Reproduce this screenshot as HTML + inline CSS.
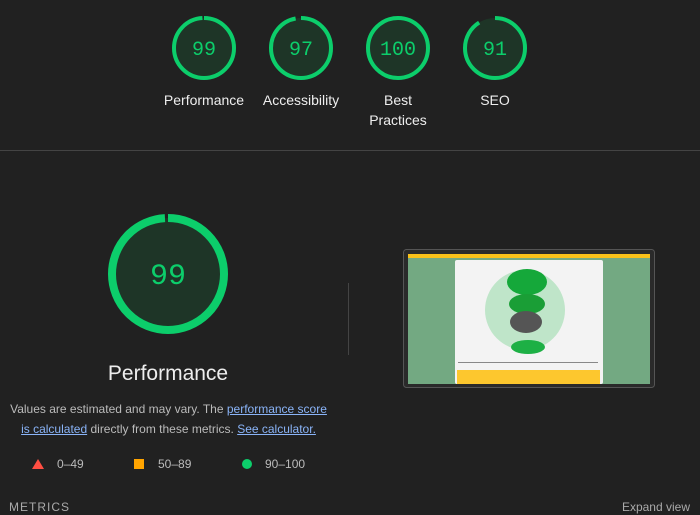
<!DOCTYPE html>
<html><head><style>
body{margin:0;width:700px;height:515px;background:#212121;font-family:"Liberation Sans",sans-serif;overflow:hidden;position:relative;color:#eee}
.lbl{position:absolute;width:100px;text-align:center;font-size:14px;color:#eee;line-height:20px}
.num{font-family:"Liberation Mono",monospace;fill:#0cce6b}
a{color:#8ab4f8;text-decoration:underline}
</style></head><body>
<svg width="700" height="515" style="position:absolute;left:0;top:0">
<g fill="#1e3527" stroke="#0cce6b" stroke-width="4">
<circle cx="204" cy="48" r="30" stroke-dasharray="186.6 188.5" transform="rotate(-90 204 48)"/>
<circle cx="301" cy="48" r="30" stroke-dasharray="182.8 188.5" transform="rotate(-90 301 48)"/>
<circle cx="398" cy="48" r="30"/>
<circle cx="495" cy="48" r="30" stroke-dasharray="171.5 188.5" transform="rotate(-90 495 48)"/>
<circle cx="168" cy="274" r="56" stroke-width="8" stroke-dasharray="348.4 351.9" transform="rotate(-90 168 274)"/>
</g>
<g class="num" font-size="20" text-anchor="middle">
<text x="204" y="55">99</text><text x="301" y="55">97</text><text x="398" y="55">100</text><text x="495" y="55">91</text>
</g>
<text class="num" x="168" y="284" font-size="30" text-anchor="middle">99</text>
<line x1="0" y1="150.5" x2="700" y2="150.5" stroke="#444" stroke-width="1"/>
<line x1="348.5" y1="283" x2="348.5" y2="355" stroke="#444"/>
<polygon points="38,459 44,469 32,469" fill="#ff4e42"/>
<rect x="134" y="459" width="10" height="10" fill="#ffa400"/>
<circle cx="247" cy="464" r="5" fill="#0cce6b"/>
<rect x="403.5" y="249.5" width="251" height="138" rx="3" fill="#2a2a2a" stroke="#555"/>
<rect x="408" y="254" width="242" height="130" fill="#73a982"/>
<rect x="408" y="254" width="242" height="4" fill="#f9c11a"/>
<rect x="455" y="260" width="148" height="124" rx="2" fill="#f3f3f3"/>
<ellipse cx="525" cy="310" rx="40" ry="40" fill="#bfe5c9"/>
<ellipse cx="527" cy="282" rx="20" ry="13" fill="#15a83a"/>
<ellipse cx="527" cy="304" rx="18" ry="10" fill="#1a9e36"/>
<ellipse cx="526" cy="322" rx="16" ry="11" fill="#555"/>
<ellipse cx="528" cy="347" rx="17" ry="7" fill="#1db045"/>
<rect x="458" y="362" width="140" height="1" fill="#888"/>
<rect x="457" y="370" width="143" height="14" fill="#fdc72e"/>
</svg>
<div class="lbl" style="left:154px;top:90px">Performance</div>
<div class="lbl" style="left:251px;top:90px">Accessibility</div>
<div class="lbl" style="left:348px;top:90px">Best<br>Practices</div>
<div class="lbl" style="left:445px;top:90px">SEO</div>
<div style="position:absolute;left:68px;width:200px;top:362px;text-align:center;font-size:21px;color:#eee">Performance</div>
<div style="position:absolute;left:0;width:337px;top:399px;text-align:center;font-size:12px;line-height:20px;color:#bbb">Values are estimated and may vary. The <a>performance score<br>is calculated</a> directly from these metrics. <a>See calculator.</a></div>
<div style="position:absolute;left:57px;top:457px;font-size:12px;color:#bbb">0–49</div>
<div style="position:absolute;left:158px;top:457px;font-size:12px;color:#bbb">50–89</div>
<div style="position:absolute;left:265px;top:457px;font-size:12px;color:#bbb">90–100</div>
<div style="position:absolute;left:9px;top:500px;font-size:12px;letter-spacing:1px;color:#aaa">METRICS</div>
<div style="position:absolute;right:10px;top:500px;font-size:12px;color:#aaa">Expand view</div>
</body></html>
